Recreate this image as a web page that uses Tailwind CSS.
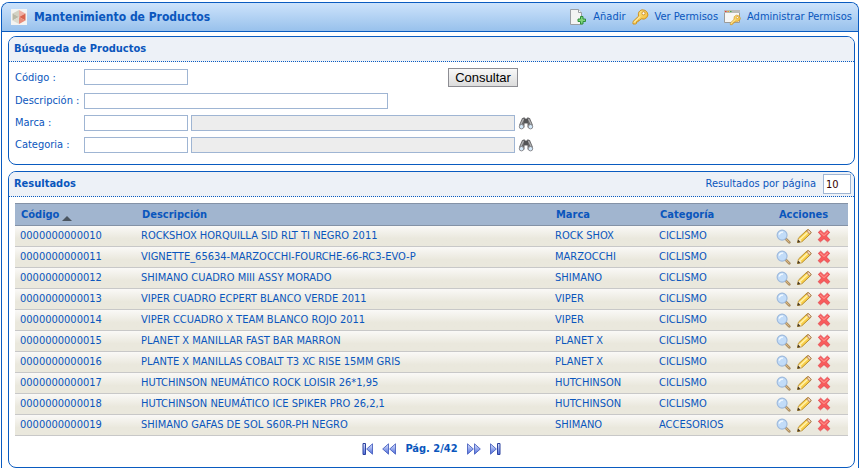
<!DOCTYPE html>
<html lang="es">
<head>
<meta charset="utf-8">
<meta name="viewport" content="width=device-width, initial-scale=1">
<title>Mantenimiento de Productos</title>
<script src="https://cdn.jsdelivr.net/npm/@tailwindcss/browser@4"></script>
</head>
<body class="bg-white pl-px pr-[6px] pt-[2px] font-['DejaVu_Sans_Condensed','DejaVu_Sans',sans-serif] text-[11px] leading-4 text-[#0a56bd]">
<svg class="absolute size-0" aria-hidden="true">
  <defs>
    <linearGradient id="gold" x1="0" y1="0" x2="1" y2="1"><stop offset="0" stop-color="#fff2a0"/><stop offset="1" stop-color="#f0b020"/></linearGradient>
    <linearGradient id="violet" x1="0" y1="0" x2="0" y2="1"><stop offset="0" stop-color="#dfe6fd"/><stop offset="1" stop-color="#4d6bdc"/></linearGradient>
    <symbol id="lens" viewBox="0 0 16 16">
      <path d="M10.500 10.500l3.700 3.700" stroke="#9c8058" stroke-width="2.800" stroke-linecap="round"/>
      <path d="M10.500 10.500l3.500 3.500" stroke="#dcb880" stroke-width="1.200" stroke-linecap="round"/>
      <circle cx="6.500" cy="6.500" r="5.300" fill="#c2dcf8" stroke="#9db9dc" stroke-width="1.200"/>
      <path d="M3.500 6a3 3 0 0 1 4-2.500" fill="none" stroke="#f2f9ff" stroke-width="1.500"/>
    </symbol>
    <symbol id="pencil" viewBox="0 0 16 16">
      <path d="M1.500 14.500l1-4.500 8.500-8q1-.800 2.200.300l1.300 1.400q.900 1.100 0 2l-8.600 8z" fill="#f9d04c" stroke="#b08424" stroke-width=".900"/>
      <path d="M4 11.500l8-7.500" stroke="#fff3b0" stroke-width="1.500"/>
      <path d="M10.500 2.800l3.200 3.400 1-1q.700-.800-.100-1.600l-1.400-1.400q-.900-.800-1.700 0z" fill="#f4d2b8" stroke="#9a6c40" stroke-width=".800"/>
      <path d="M2.800 10.300l3 3-2 .600-1.500-1.500z" fill="#fbeed2"/>
      <path d="M1.300 14.800l.900-3.300 2.300 2.400z" fill="#4a3b28"/>
    </symbol>
    <symbol id="cross" viewBox="0 0 16 16">
      <path d="M1.500 3.800L4.200 1.300 8 5l3.800-3.700 2.700 2.500L10.800 8l3.900 4.200-2.600 2.500L8 11l-4.100 3.700-2.600-2.500L5.200 8z" fill="#f85c5c" stroke="#dc3c48" stroke-width=".800" stroke-linejoin="round"/>
      <path d="M3.500 3.500L8 7.500l4.500-4" fill="none" stroke="#ff8e88" stroke-width="1.200"/>
    </symbol>
    <symbol id="binoculars" viewBox="0 0 16 14">
      <path d="M4 2.300L6.300 1.300 7.300 2.500h1.400L9.700 1.300 12 2.300l2.800 6.500v2.700H9.500V7.500h-3v4H1.200V8.800z" fill="#69696b"/>
      <path d="M5.500 3L3 8M10.500 3L13 8" stroke="#b2b2b4" stroke-width="1.300"/>
      <path d="M7 3v4M9 3v4" stroke="#414143"/>
      <circle cx="3.500" cy="10.700" r="2.200" fill="#d5eafa" stroke="#8b8b90"/>
      <circle cx="12.500" cy="10.700" r="2.200" fill="#d5eafa" stroke="#8b8b90"/>
    </symbol>
    <symbol id="key" viewBox="0 0 18 18">
      <path d="M7.500 8.200L2 13.500V16h2.800l.700-.700v-1.500h1.700v-1.500h1.700l1.300-1.500q3.200 1.200 5.500-1.200 2.300-2.600.500-5.300T11 1.800Q6.500 3 7.500 8.200z" fill="url(#gold)" stroke="#d0921f"/>
      <path d="M3 14.500l6-6" stroke="#fff7c8"/>
      <circle cx="12.500" cy="5.300" r="1.600" fill="#fff" stroke="#c98a1c" stroke-width=".900"/>
    </symbol>
    <symbol id="step" viewBox="0 0 7 12">
      <path d="M.500 .800v10.400L6.300 6z" fill="url(#violet)" stroke="#4a62c0" stroke-width=".900"/>
    </symbol>
    <symbol id="back" viewBox="0 0 7 12">
      <path d="M6.500 .800v10.400L.700 6z" fill="url(#violet)" stroke="#4a62c0" stroke-width=".900"/>
    </symbol>
    <symbol id="forward" viewBox="0 0 14 12"><use href="#step" width="7" height="12"/><use href="#step" x="7" width="7" height="12"/></symbol>
    <symbol id="rewind" viewBox="0 0 14 12"><use href="#back" width="7" height="12"/><use href="#back" x="7" width="7" height="12"/></symbol>
    <symbol id="end" viewBox="0 0 11 12"><use href="#step" width="7" height="12"/><path d="M7.500.500h2.500v11H7.500z" fill="url(#violet)" stroke="#2c429e"/></symbol>
    <symbol id="start" viewBox="0 0 11 12"><use href="#back" x="4" width="7" height="12"/><path d="M1 .500h2.500v11H1z" fill="url(#violet)" stroke="#2c429e"/></symbol>
  </defs>
</svg>

<main class="rounded-t-lg border border-b-0 border-[#0a5bc0]">
  <header class="flex h-7 items-center justify-between rounded-t-[7px] bg-linear-to-b from-[#cde3fb] to-[#98c1ec] pl-[9px] pr-[6px] pb-px">
    <div class="flex items-center gap-[7px]">
      <svg class="size-4" viewBox="0 0 16 16" aria-hidden="true">
        <path fill="#f4f4f2" d="M0 0h16v16H0z"/>
        <path d="M8 1L1.500 4.500 8 8z" fill="#d3d2c4"/><path d="M1.500 4.500v7L8 8z" fill="#b9b8a6"/><path d="M1.500 11.500L8 15V8z" fill="#dcdbd0"/>
        <path d="M8 1l6.500 3.500L8 8z" fill="#eeb0a4"/><path d="M14.500 4.500v7L8 8z" fill="#d9644f"/><path d="M14.500 11.500L8 15V8z" fill="#e88c7a"/>
      </svg>
      <h1 class="text-[12px] font-bold">Mantenimiento de Productos</h1>
    </div>
    <nav class="flex items-center gap-[5px]">
      <a href="#" class="flex items-center gap-[6px]">
        <svg class="size-[18px]" viewBox="0 0 18 18" aria-hidden="true">
          <path d="M1.500 1.500h8l3 3v12h-11z" fill="#f3f4f3" stroke="#9a9fa3"/><path d="M9.500 1.500v3h3" fill="#fff" stroke="#9a9fa3"/>
          <path d="M11.500 8.500h2.500v2.500h2.500v2.500H14V16h-2.500v-2.500H9V11h2.500z" fill="#7fd47a" stroke="#2e8f3c"/>
        </svg>Añadir</a>
      <a href="#" class="flex items-center gap-[6px]"><svg class="size-[18px]" aria-hidden="true"><use href="#key"/></svg>Ver Permisos</a>
      <a href="#" class="flex items-center gap-[6px]">
        <svg class="size-[18px]" viewBox="0 0 18 18" aria-hidden="true">
          <path d="M1.500 2.500h15v12h-15z" fill="#f7f7f5" stroke="#9b9b98"/><path d="M1 2h16v3H1z" fill="#b9bab8"/>
          <path d="M2 3h1.500v1H2z" fill="#e33"/><path d="M4.500 3H6v1H4.500z" fill="#e9a81c"/><path d="M7 3h1.500v1H7z" fill="#4a4"/>
          <use href="#key" x="6" y="6" width="12" height="12"/>
        </svg>Administrar Permisos</a>
    </nav>
  </header>

  <div class="flex flex-col gap-[6px] border-t border-[#0a5bc0] pt-1 pl-[6px] pr-[3px]">
    <section class="rounded-lg border border-[#0a5bc0]">
      <h2 class="flex h-[25px] items-center rounded-t-[7px] border-b border-dotted border-[#0a5bc0] bg-[#edf1f7] px-[5px] text-[11px] font-bold">Búsqueda de Productos</h2>
      <form class="grid grid-cols-[69px_1fr] gap-y-[6px] px-[6px] pt-[7px] pb-[11px]">
        <label for="codigo" class="pt-px">Código :</label>
        <div class="flex h-[18px]">
          <input id="codigo" type="text" class="h-4 w-[104px] border border-[#9fb5d3] bg-white px-1">
          <button type="submit" class="ml-[260px] -mt-px h-[19px] w-[70px] border border-[#8d8d93] bg-linear-to-b from-[#f8f8f8] to-[#dcdcdc] font-['Liberation_Sans',sans-serif] text-[13px] leading-4 text-black">Consultar</button>
        </div>
        <label for="descripcion">Descripción :</label>
        <input id="descripcion" type="text" class="h-4 w-[304px] border border-[#9fb5d3] bg-white px-1">
        <label for="marca">Marca :</label>
        <div class="flex gap-[3px]">
          <input id="marca" type="text" class="h-4 w-[104px] border border-[#9fb5d3] bg-white px-1">
          <input type="text" readonly aria-label="Nombre de la marca" class="h-4 w-[324px] border border-[#9fb5d3] bg-[#ededed] px-1">
          <button type="button" aria-label="Buscar marca"><svg class="h-[14px] w-4" aria-hidden="true"><use href="#binoculars"/></svg></button>
        </div>
        <label for="categoria">Categoria :</label>
        <div class="flex gap-[3px]">
          <input id="categoria" type="text" class="h-4 w-[104px] border border-[#9fb5d3] bg-white px-1">
          <input type="text" readonly aria-label="Nombre de la categoria" class="h-4 w-[324px] border border-[#9fb5d3] bg-[#ededed] px-1">
          <button type="button" aria-label="Buscar categoria"><svg class="h-[14px] w-4" aria-hidden="true"><use href="#binoculars"/></svg></button>
        </div>
      </form>
    </section>

    <section class="rounded-lg border border-[#0a5bc0]">
      <div class="flex h-[25px] items-center justify-between rounded-t-[7px] border-b border-dotted border-[#0a5bc0] bg-[#edf1f7] pl-[5px] pr-[3px]">
        <h2 class="text-[11px] font-bold">Resultados</h2>
        <div class="flex items-center gap-[7px]">
          <label for="porpagina">Resultados por página</label>
          <input id="porpagina" type="text" value="10" class="h-5 w-7 border border-[#9fb5d3] bg-white px-[2px] text-[#330000]">
        </div>
      </div>
      <div class="px-[6px] pt-[6px]">
        <table class="w-full table-fixed border-separate border-spacing-0 [&_td]:h-[21px] [&_td]:border-b [&_td]:border-[#c8c8c8] [&_td]:pl-[5px] [&_td]:whitespace-nowrap [&_th]:h-[23px] [&_th]:border-y [&_th]:border-[#8492a6] [&_th]:bg-[#a1b5cf] [&_th]:pl-[6px] [&_th]:text-left [&_tbody_tr]:bg-linear-to-b [&_tbody_tr]:from-[#faf9f7] [&_tbody_tr]:to-[#eae8dd] [&_tbody_tr]:to-60%">
          <colgroup><col class="w-[121px]"><col><col class="w-[104px]"><col class="w-[105px]"><col class="w-[89px]"></colgroup>
          <thead><tr>
            <th scope="col">Código<svg class="ml-[3px] inline h-[5px] w-[10px] align-[-3px]" viewBox="0 0 10 5" aria-hidden="true"><path d="M5 0l5 5H0z" fill="#4b5560"/></svg></th>
            <th scope="col">Descripción</th><th scope="col">Marca</th><th scope="col">Categoría</th>
            <th scope="col"><span class="block pr-[6px] text-center">Acciones</span></th>
          </tr></thead>
          <tbody>
            <tr><td>0000000000010</td><td>ROCKSHOX HORQUILLA SID RLT TI NEGRO 2011</td><td>ROCK SHOX</td><td>CICLISMO</td><td></td></tr>
            <tr><td>0000000000011</td><td>VIGNETTE_65634-MARZOCCHI-FOURCHE-66-RC3-EVO-P</td><td>MARZOCCHI</td><td>CICLISMO</td><td></td></tr>
            <tr><td>0000000000012</td><td>SHIMANO CUADRO MIII ASSY MORADO</td><td>SHIMANO</td><td>CICLISMO</td><td></td></tr>
            <tr><td>0000000000013</td><td>VIPER CUADRO ECPERT BLANCO VERDE 2011</td><td>VIPER</td><td>CICLISMO</td><td></td></tr>
            <tr><td>0000000000014</td><td>VIPER CCUADRO X TEAM BLANCO ROJO 2011</td><td>VIPER</td><td>CICLISMO</td><td></td></tr>
            <tr><td>0000000000015</td><td>PLANET X MANILLAR FAST BAR MARRON</td><td>PLANET X</td><td>CICLISMO</td><td></td></tr>
            <tr><td>0000000000016</td><td>PLANTE X MANILLAS COBALT T3 XC RISE 15MM GRIS</td><td>PLANET X</td><td>CICLISMO</td><td></td></tr>
            <tr><td>0000000000017</td><td>HUTCHINSON NEUMÁTICO ROCK LOISIR 26*1,95</td><td>HUTCHINSON</td><td>CICLISMO</td><td></td></tr>
            <tr><td>0000000000018</td><td>HUTCHINSON NEUMÁTICO ICE SPIKER PRO 26,2,1</td><td>HUTCHINSON</td><td>CICLISMO</td><td></td></tr>
            <tr><td>0000000000019</td><td>SHIMANO GAFAS DE SOL S60R-PH NEGRO</td><td>SHIMANO</td><td>ACCESORIOS</td><td></td></tr>
          </tbody>
        </table>
        <nav class="flex h-[31px] items-center justify-center gap-[9px] pb-[6px]" aria-label="Paginación">
          <button type="button" aria-label="Primera página"><svg class="h-3 w-[11px]" aria-hidden="true"><use href="#start"/></svg></button>
          <button type="button" aria-label="Página anterior"><svg class="h-3 w-[14px]" aria-hidden="true"><use href="#rewind"/></svg></button>
          <span class="font-bold">Pág. 2/42</span>
          <button type="button" aria-label="Página siguiente"><svg class="h-3 w-[14px]" aria-hidden="true"><use href="#forward"/></svg></button>
          <button type="button" aria-label="Última página"><svg class="h-3 w-[11px]" aria-hidden="true"><use href="#end"/></svg></button>
        </nav>
      </div>
    </section>
  </div>
</main>
<template id="actions">
  <div class="flex items-center gap-[5px] pl-3">
    <button type="button" aria-label="Ver"><svg class="size-[15px]" aria-hidden="true"><use href="#lens"/></svg></button>
    <button type="button" aria-label="Editar"><svg class="size-4" aria-hidden="true"><use href="#pencil"/></svg></button>
    <button type="button" aria-label="Eliminar"><svg class="size-[14px]" aria-hidden="true"><use href="#cross"/></svg></button>
  </div>
</template>
<script>
  const actions = document.getElementById('actions');
  document.querySelectorAll('tbody td:last-child').forEach(cell => cell.append(actions.content.cloneNode(true)));
</script>
</body>
</html>
